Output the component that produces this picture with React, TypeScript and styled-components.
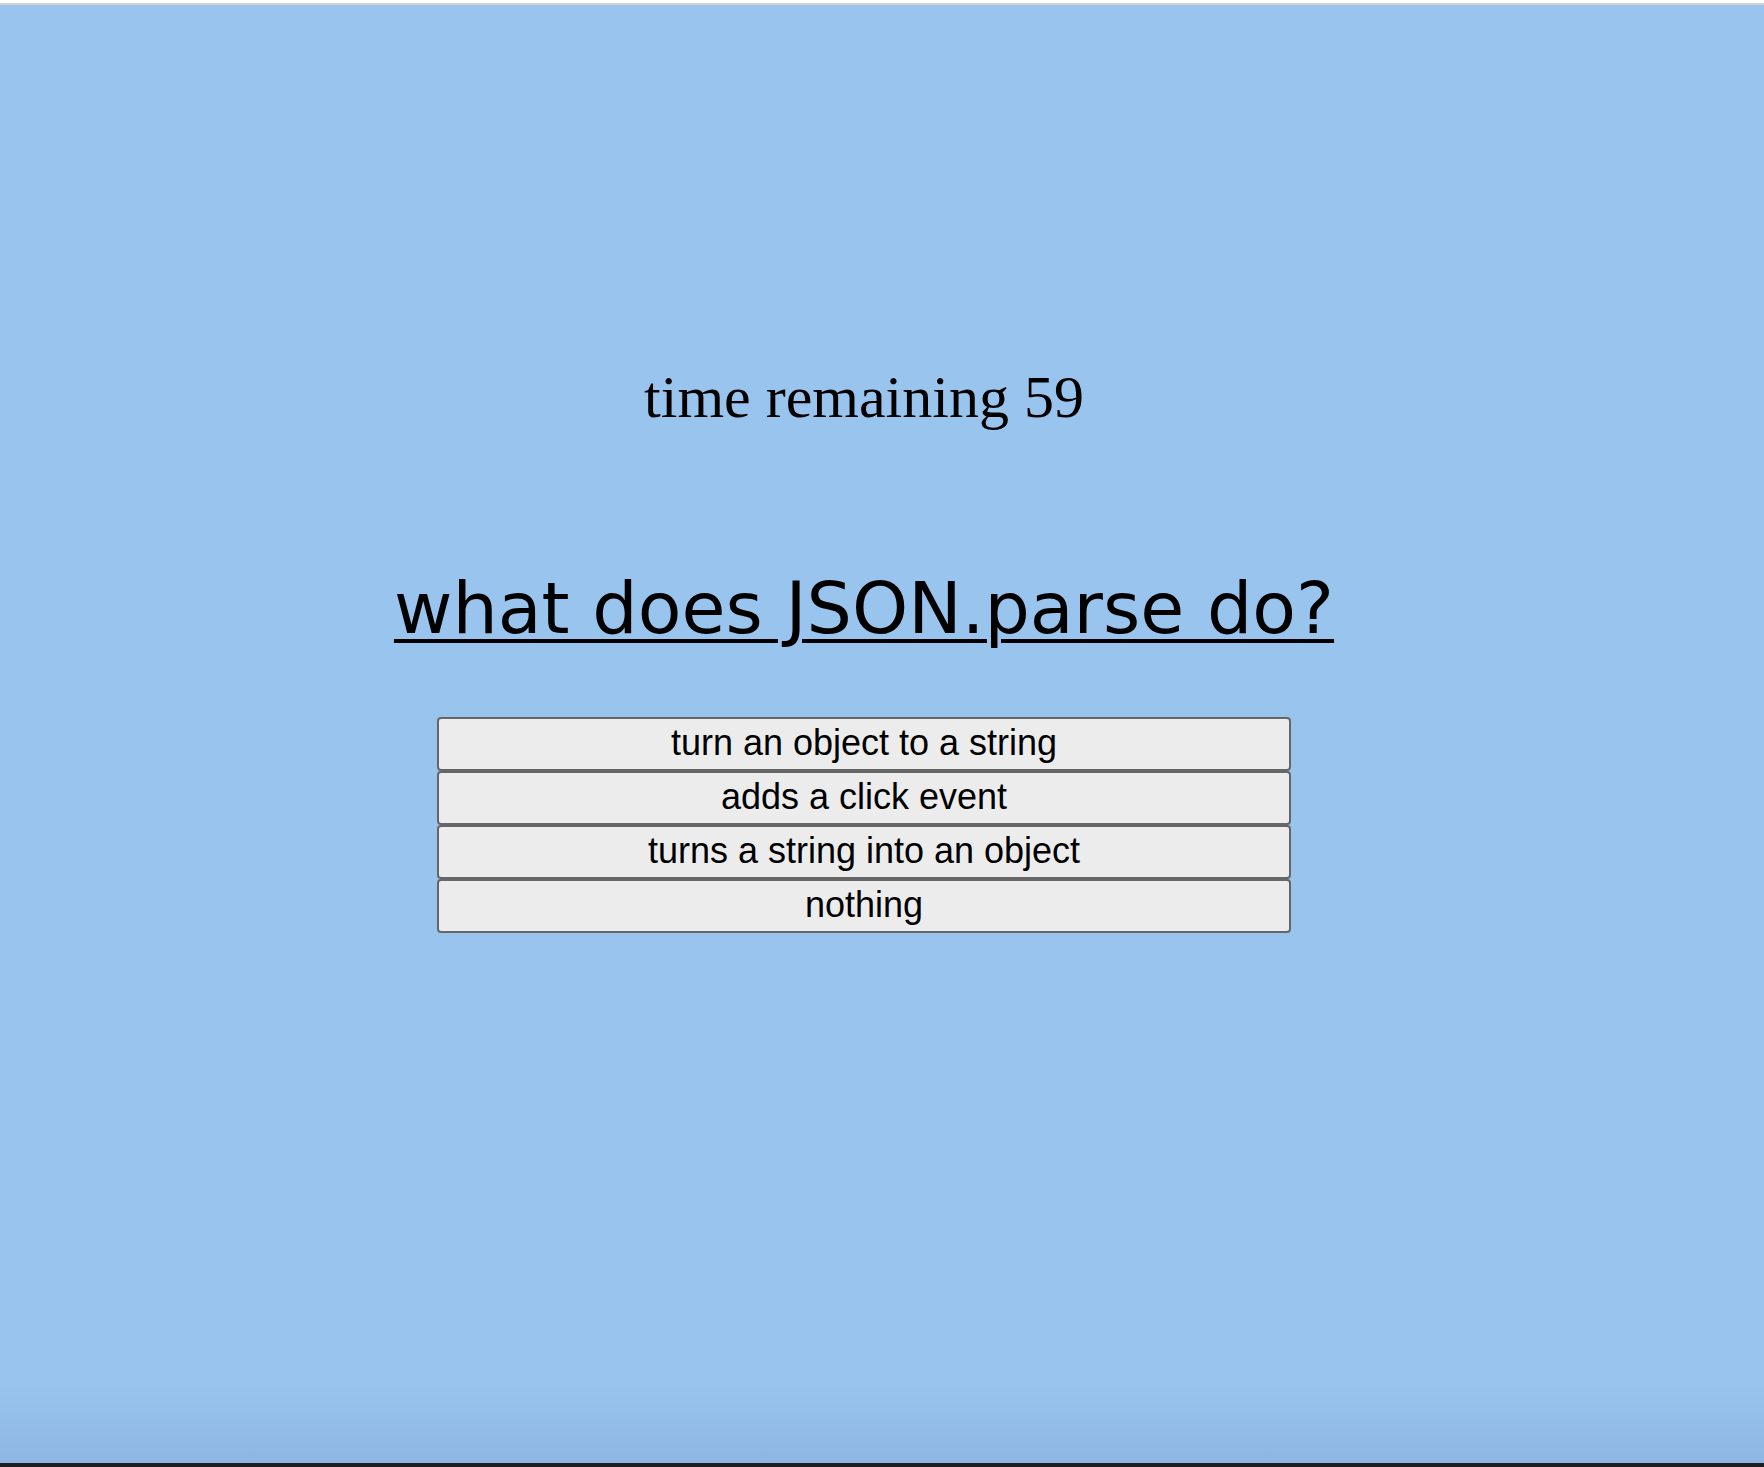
import React from "react";
import styled, { createGlobalStyle } from "styled-components";

const GlobalStyle = createGlobalStyle`
  html, body {
    margin: 0;
    padding: 0;
    height: 100%;
  }
  body {
    background: #99c4ee;
    font-family: "Liberation Serif", "Times New Roman", serif;
  }
`;

const Page = styled.div`
  height: 100vh;
  display: flex;
  flex-direction: column;
  background: #99c4ee;
  overflow: hidden;
`;

const TopEdge = styled.div`
  flex: 0 0 auto;
  height: 3px;
  background: #ffffff;
  border-bottom: 2px solid #d3d3d3;
`;

const Main = styled.main`
  flex: 1 1 auto;
  width: calc(100% - 36px);
  display: flex;
  flex-direction: column;
  align-items: center;
  padding-top: 359px;
  box-sizing: border-box;
`;

const Timer = styled.div`
  font-family: "Liberation Serif", "Times New Roman", serif;
  font-size: 60px;
  line-height: 66px;
  color: #000;
`;

const Question = styled.h1`
  margin: 137px 0 0;
  font-family: "DejaVu Sans", Verdana, sans-serif;
  font-weight: normal;
  font-size: 71.5px;
  line-height: 83px;
  color: #000;
  text-decoration: underline;
  text-decoration-thickness: 4px;
  text-underline-offset: 6px;
`;

const Answers = styled.div`
  margin-top: 67px;
  width: 854px;
  display: flex;
  flex-direction: column;
`;

const Answer = styled.button`
  height: 54px;
  width: 100%;
  box-sizing: border-box;
  margin: 0;
  padding: 0 8px 4px;
  background: #ececec;
  border: 2px solid #666666;
  border-radius: 4px;
  font-family: "Liberation Sans", Arial, sans-serif;
  font-size: 36px;
  line-height: 41px;
  color: #000;
  cursor: pointer;
`;

const BottomShade = styled.div`
  flex: 0 0 auto;
  height: 80px;
  background: linear-gradient(to bottom, rgba(120, 160, 205, 0) 0%, rgba(120, 160, 205, 0.35) 100%);
`;

const BottomEdge = styled.div`
  flex: 0 0 auto;
  height: 4px;
  background: #1e1e1e;
`;

const answers = [
  "turn an object to a string",
  "adds a click event",
  "turns a string into an object",
  "nothing",
];

export default function App() {
  return (
    <>
      <GlobalStyle />
      <Page>
        <TopEdge />
        <Main>
          <Timer>time remaining 59</Timer>
          <Question>what does JSON.parse do?</Question>
          <Answers>
            {answers.map((a) => (
              <Answer key={a}>{a}</Answer>
            ))}
          </Answers>
        </Main>
        <BottomShade />
        <BottomEdge />
      </Page>
    </>
  );
}
